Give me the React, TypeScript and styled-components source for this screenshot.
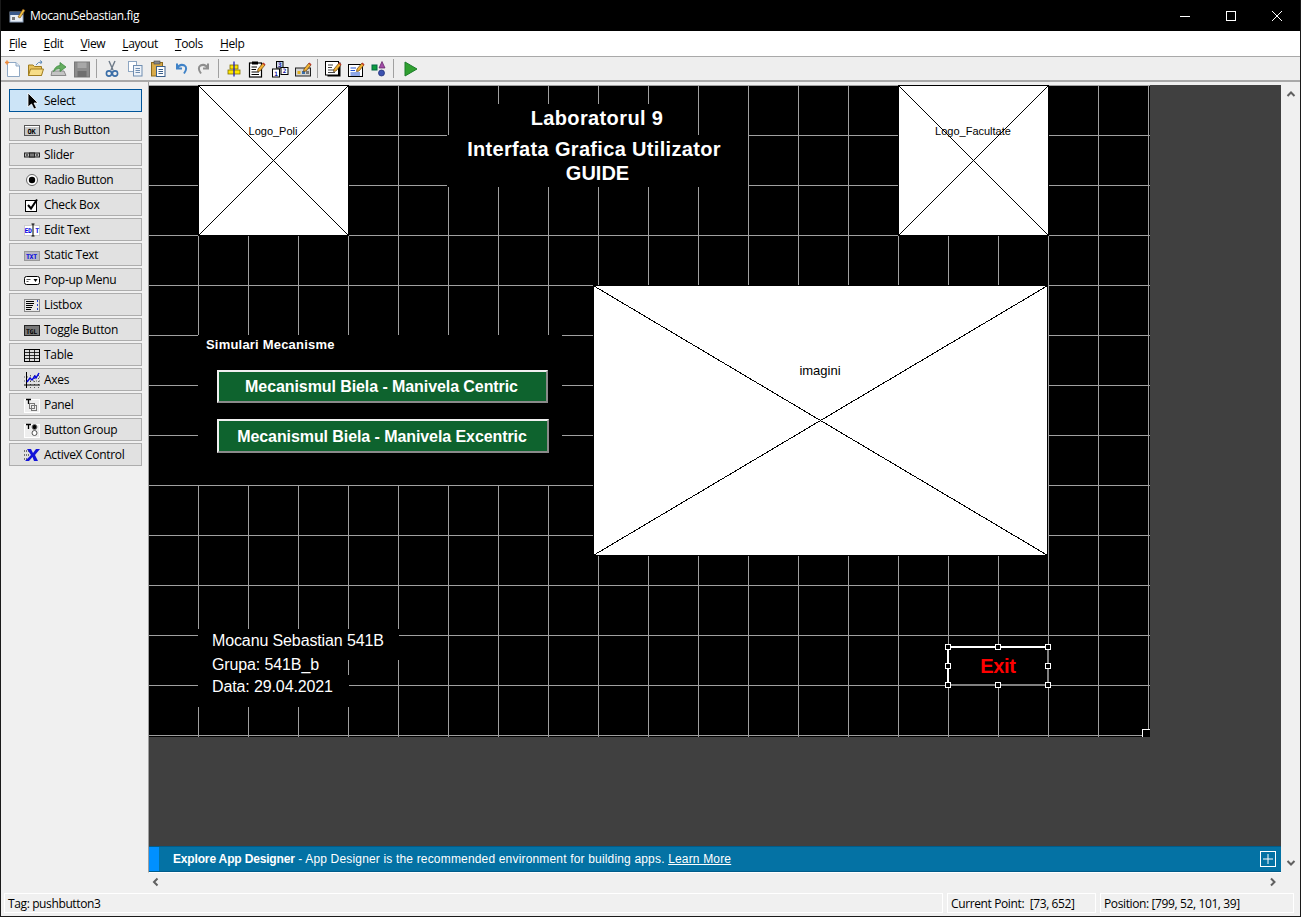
import React from 'react';
import styled, { createGlobalStyle } from 'styled-components';

const ARIAL = '"Liberation Sans", Arial, sans-serif';

const GlobalStyle = createGlobalStyle`
  html, body {
    margin: 0;
    padding: 0;
    background: #f0f0f0;
    overflow: hidden;
  }
  * {
    box-sizing: border-box;
  }
`;

const Window = styled.div`
  width: 1301px;
  height: 917px;
  display: flex;
  flex-direction: column;
  background: #f0f0f0;
  border-left: 1px solid #1a1a1a;
  border-right: 1px solid #1a1a1a;
  border-bottom: 1px solid #1a1a1a;
  font-family: "Open Sans", "Noto Sans", sans-serif;
  font-size: 12px;
  color: #000;
`;

const TitleBar = styled.div`
  height: 31px;
  flex: none;
  display: flex;
  align-items: center;
  background: #000;
  color: #fff;
  padding-left: 8px;
`;

const TitleText = styled.span`
  margin-left: 4px;
  flex: 1;
  font-size: 12px;
  letter-spacing: -0.38px;
`;

const WinButton = styled.div`
  width: 46px;
  height: 31px;
  display: flex;
  align-items: center;
  justify-content: center;
`;

const MenuBar = styled.div`
  height: 26px;
  flex: none;
  display: flex;
  align-items: center;
  gap: 17px;
  padding: 0 0 1px 8px;
  background: #fff;
  border-bottom: 1px solid #a9a9a9;
`;

const MenuItem = styled.span`
  font-size: 12px;
  letter-spacing: -0.36px;
  u {
    text-underline-offset: 2px;
  }
`;

const ToolBar = styled.div`
  height: 25px;
  flex: none;
  display: flex;
  align-items: center;
  background: #eeeeee;
  border-bottom: 2px solid #a9a9a9;
`;

const ToolCell = styled.div`
  width: 23px;
  height: 20px;
  display: flex;
  align-items: center;
  justify-content: center;
`;

const ToolSep = styled.div<{ $after: number }>`
  width: 1px;
  height: 19px;
  margin: 0 ${p => p.$after}px 0 3px;
  background: #a0a0a0;
`;

const Body = styled.div`
  flex: 1;
  min-height: 0;
  display: flex;
`;

const Palette = styled.div`
  width: 147px;
  flex: none;
  display: flex;
  flex-direction: column;
  gap: 2px;
  padding: 7px 6px 0 8px;
  background: #f0f0f0;
`;

const PaletteButton = styled.div<{ $active?: boolean }>`
  height: 23px;
  flex: none;
  display: flex;
  align-items: center;
  padding-left: 14px;
  margin-bottom: ${p => (p.$active ? '4px' : '0')};
  background: ${p => (p.$active ? '#cce4f7' : '#e1e1e1')};
  border: ${p => (p.$active ? '1px solid #005499' : '1px solid #adadad')};
  letter-spacing: -0.3px;
`;

const PaletteIcon = styled.span`
  width: 20px;
  height: 16px;
  flex: none;
  display: flex;
  align-items: center;
`;

const Workspace = styled.div`
  flex: 1;
  min-width: 0;
  display: grid;
  grid-template-columns: 1fr 19px;
  grid-template-rows: 1fr 20px;
`;

const MainColumn = styled.div`
  min-height: 0;
  display: flex;
  flex-direction: column;
  padding-top: 3px;
  border-left: 1px solid #a0a0a0;
  border-bottom: 1px solid #fff;
`;

const FigureArea = styled.div`
  flex: 1;
  min-height: 0;
  background: #404040;
`;

const Figure = styled.div`
  position: relative;
  width: 1001px;
  height: 652px;
  background-color: #000;
  background-image:
    linear-gradient(to right, #a0a0a0 1px, transparent 1px),
    linear-gradient(to bottom, #a0a0a0 1px, transparent 1px);
  background-size: 50px 50px;
  background-position: 49px 0;
  font-family: ${ARIAL};
`;

const ResizeGrip = styled.div`
  position: absolute;
  right: 0;
  bottom: 0;
  width: 8px;
  height: 8px;
  background: #000;
  border-top: 1px solid #fff;
  border-left: 1px solid #fff;
`;

const Placeholder = styled.div<{ $x: number; $y: number; $w: number; $h: number }>`
  position: absolute;
  left: ${p => p.$x}px;
  top: ${p => p.$y}px;
  width: ${p => p.$w}px;
  height: ${p => p.$h}px;
  background: #fff;
  border: 1px solid #000;
  svg {
    display: block;
    width: 100%;
    height: 100%;
  }
`;

const PlaceholderLabel = styled.span<{ $top: number; $size: number }>`
  position: absolute;
  top: ${p => p.$top}px;
  left: 0;
  right: 1px;
  text-align: center;
  font-size: ${p => p.$size}px;
  color: #000;
`;

const StaticText = styled.div<{ $x: number; $y: number; $w: number; $h: number }>`
  position: absolute;
  left: ${p => p.$x}px;
  top: ${p => p.$y}px;
  width: ${p => p.$w}px;
  height: ${p => p.$h}px;
  background: #000;
  color: #fff;
`;

const LabTitle = styled.div<{ $spacing: number; $left?: number; $right?: number }>`
  padding-left: ${p => p.$left || 0}px;
  padding-right: ${p => p.$right || 0}px;
  text-align: center;
  font-size: 20px;
  font-weight: 700;
  line-height: 24px;
  letter-spacing: ${p => p.$spacing}px;
`;

const TitleBlock = styled.div<{ $top: number }>`
  padding-top: ${p => p.$top}px;
`;

const InfoLine = styled.div<{ $height: number }>`
  padding-left: 14px;
  font-size: 16px;
  line-height: ${p => p.$height}px;
  letter-spacing: -0.12px;
  white-space: nowrap;
`;

const MechanismPanel = styled.div`
  position: absolute;
  left: 49px;
  top: 250px;
  width: 364px;
  height: 150px;
  display: flex;
  flex-direction: column;
  align-items: flex-start;
  padding-left: 19px;
  background: #000;
  color: #fff;
`;

const PanelTitle = styled.div`
  margin: 1px 0 16px -11px;
  font-size: 13px;
  font-weight: 700;
  line-height: 18px;
  letter-spacing: 0.2px;
`;

const MechanismButton = styled.div<{ $w: number; $h: number }>`
  width: ${p => p.$w}px;
  height: ${p => p.$h}px;
  margin-bottom: 16px;
  padding: 1px 2px 0 0;
  display: flex;
  align-items: center;
  justify-content: center;
  background: #0e632e;
  border-top: 2px solid #f0f0f0;
  border-left: 2px solid #f0f0f0;
  border-bottom: 2px solid #8a8a8a;
  border-right: 2px solid #8a8a8a;
  font-size: 16px;
  font-weight: 700;
  letter-spacing: -0.08px;
  white-space: nowrap;
`;

const ExitButton = styled.div`
  position: absolute;
  left: 798px;
  top: 561px;
  width: 102px;
  height: 40px;
  display: flex;
  align-items: center;
  justify-content: center;
  background: #000;
  border-top: 2px solid #fff;
  border-left: 2px solid #fff;
  border-bottom: 2px solid #808080;
  border-right: 2px solid #808080;
  color: #ff0000;
  font-size: 20px;
  font-weight: 700;
  letter-spacing: -0.3px;
`;

const Handle = styled.span<{ $x: number; $y: number }>`
  position: absolute;
  left: ${p => p.$x}px;
  top: ${p => p.$y}px;
  width: 6px;
  height: 6px;
  background: #000;
  border: 1px solid #fff;
`;

const Banner = styled.div`
  height: 26px;
  flex: none;
  display: flex;
  align-items: center;
  padding-right: 5px;
  background: #0472a4;
  border-top: 1px solid #005c8a;
  border-bottom: 1px solid #005c8a;
  color: #fff;
  font-family: ${ARIAL};
  font-size: 12px;
`;

const BannerAccent = styled.div`
  width: 10px;
  align-self: stretch;
  flex: none;
  background: #0090ff;
  margin-right: 14px;
`;

const BannerText = styled.div`
  flex: 1;
  letter-spacing: 0.17px;
  b {
    letter-spacing: -0.16px;
  }
  a {
    color: #fff;
    text-decoration: underline;
  }
`;

const VScroll = styled.div`
  grid-row: 1 / 3;
  grid-column: 2;
  display: flex;
  flex-direction: column;
  justify-content: space-between;
  align-items: center;
  padding: 8px 0 25px;
  background: #f0f0f0;
`;

const HScroll = styled.div`
  display: flex;
  align-items: center;
  justify-content: space-between;
  padding: 0 3px 3px 3px;
`;

const StatusBar = styled.div`
  height: 23px;
  flex: none;
  display: flex;
  gap: 4px;
  padding: 0 3px 3px 3px;
  letter-spacing: -0.38px;
`;

const StatusCell = styled.div<{ $w: number }>`
  width: ${p => p.$w}px;
  display: flex;
  align-items: center;
  padding-left: 3px;
  border: 1px solid #fff;
  white-space: pre;
`;

const Ico = styled.svg`
  display: block;
  flex: none;
`;

const Tiny = styled.text`
  font-family: "DejaVu Sans Mono", monospace;
  font-weight: 700;
`;

const Chevron = ({ dir }: { dir: 'up' | 'down' | 'left' | 'right' }) => {
  const d = {
    up: 'M1.5 6 L5 2.5 L8.5 6',
    down: 'M1.5 3 L5 6.5 L8.5 3',
    left: 'M6.5 1.5 L3 5 L6.5 8.5',
    right: 'M3 1.5 L6.5 5 L3 8.5',
  }[dir];
  return (
    <Ico width="10" height="10" viewBox="0 0 10 10">
      <path d={d} fill="none" stroke="#606060" strokeWidth="2" />
    </Ico>
  );
};

const Tool = ({ children }: { children: React.ReactNode }) => (
  <ToolCell>
    <Ico width="18" height="18" viewBox="0 0 18 18">
      {children}
    </Ico>
  </ToolCell>
);

const Pencil = () => (
  <>
    <path d="M10 9 L15 3 L17 5 L12 11 L9.5 11.5 Z" fill="#f2b233" stroke="#5a3a10" strokeWidth="0.7" />
    <path d="M15 3 L17 5" stroke="#c0392b" strokeWidth="1.6" />
  </>
);

const toolbarGroups: React.ReactNode[][] = [
  [
    <>
      <path d="M3.5 2.5 H12 L15.5 6 V16.5 H3.5 Z" fill="#fff" stroke="#8fa8c4" />
      <path d="M12 2.5 V6 H15.5" fill="#dfe8f2" stroke="#8fa8c4" />
      <path d="M1 2.5 H5 M3 .5 V4.5" stroke="#ee8a3a" strokeWidth="1.6" />
    </>,
    <>
      <path d="M1.5 5 H6 L7.5 6.5 H14.5 V15.5 H1.5 Z" fill="#e8c25c" stroke="#a07d20" />
      <path d="M1.5 15.5 L3.5 9 H16.5 L14.5 15.5 Z" fill="#f7dd86" stroke="#a07d20" />
      <path d="M9 5 Q11 1.5 15 2 M15 2 L13 .5 M15 2 L13.5 4" fill="none" stroke="#5b87b5" />
    </>,
    <>
      <path d="M2 11 H14 L16 15.5 H1 Z" fill="#c4c4c4" stroke="#8a8a8a" />
      <path d="M3.5 11.5 Q5 6 10 5.5 V2.5 L16 7 L10 11.5 V8.5 Q6 8.5 3.5 11.5 Z" fill="#64ad5f" stroke="#3f8a42" strokeWidth="0.8" />
    </>,
    <>
      <rect x="1.5" y="2" width="15" height="15" fill="#8c8c8c" stroke="#787878" />
      <rect x="4.5" y="2.5" width="9" height="5.5" fill="#a8a8a8" />
      <rect x="4.5" y="11" width="9" height="6" fill="#6f6f6f" />
    </>,
  ],
  [
    <>
      <path d="M6 1 L10 10 M12 1 L8 10" stroke="#6d7a88" strokeWidth="1.4" />
      <circle cx="6" cy="13.5" r="2.6" fill="none" stroke="#3a6ea8" strokeWidth="1.6" />
      <circle cx="12" cy="13.5" r="2.6" fill="none" stroke="#3a6ea8" strokeWidth="1.6" />
    </>,
    <>
      <rect x="2.5" y="1.5" width="8" height="10" fill="#fff" stroke="#8da6c2" />
      <rect x="7.5" y="5.5" width="8.5" height="10.5" fill="#eef3f9" stroke="#6f8db0" />
      <path d="M9.5 8.5 H14 M9.5 10.5 H14 M9.5 12.5 H14" stroke="#6f8db0" />
    </>,
    <>
      <rect x="2.5" y="2.5" width="11" height="13.5" fill="#d9ab4a" stroke="#8c6a1e" />
      <rect x="5" y="1" width="6" height="3" fill="#888" stroke="#444" strokeWidth="0.6" />
      <rect x="7.5" y="6.5" width="8.5" height="10" fill="#fff" stroke="#3b5f8a" />
      <path d="M9.5 9.5 H14 M9.5 11.5 H14 M9.5 13.5 H14" stroke="#3b5f8a" />
    </>,
    <path d="M5 8 Q8 3.5 12.5 5.5 Q16 8 12 13.5 M5 3.5 V8.5 H10" fill="none" stroke="#3f82c7" strokeWidth="2" />,
    <path d="M13 8 Q10 3.5 5.5 5.5 Q2 8 6 13.5 M13 3.5 V8.5 H8" fill="none" stroke="#8e8e8e" strokeWidth="2" />,
  ],
  [
    <>
      <rect x="5" y="5" width="8" height="4" fill="#ffe600" stroke="#806f00" strokeWidth="0.8" />
      <rect x="3" y="10" width="12" height="4" fill="#ffe600" stroke="#806f00" strokeWidth="0.8" />
      <path d="M9 1.5 V16.5" stroke="#1010c0" strokeWidth="1.2" />
    </>,
    <>
      <rect x="1.5" y="3" width="12" height="14" fill="#fff" stroke="#000" strokeWidth="1.2" />
      <rect x="4" y="1.5" width="6" height="3" fill="#000" />
      <path d="M3.5 7 H9 M3.5 9.5 H8 M3.5 12 H11 M3.5 14.5 H11" stroke="#000" />
      <Pencil />
    </>,
    <>
      <rect x="5.5" y="1.5" width="6.5" height="6.5" fill="#c9d8ea" stroke="#000" />
      <rect x="1.5" y="9" width="7" height="8" fill="#fff" stroke="#000" />
      <rect x="10" y="7.5" width="7" height="7" fill="#fff" stroke="#000" />
      <Tiny x="7" y="7" fontSize="6" fill="#1010a0">3</Tiny>
      <Tiny x="3.2" y="15.5" fontSize="6" fill="#1010a0">1</Tiny>
      <Tiny x="11.8" y="13.4" fontSize="6" fill="#1010a0">2</Tiny>
    </>,
    <>
      <rect x="1.5" y="8" width="15" height="8" fill="#d4d4d4" stroke="#202020" />
      <rect x="3.5" y="11" width="3" height="3" fill="#e0b020" />
      <rect x="8" y="11" width="3" height="3" fill="#3a6ea8" />
      <rect x="12" y="11" width="3" height="3" fill="#777" />
      <Pencil />
    </>,
  ],
  [
    <>
      <rect x="3.5" y="2.5" width="13" height="14" fill="#000" />
      <rect x="1.5" y="1.5" width="13" height="13.5" fill="#fff" stroke="#000" />
      <path d="M4 5 H9 M4 7.5 H8 M4 10 H11 M4 12.5 H11" stroke="#444" />
      <Pencil />
    </>,
    <>
      <rect x="1.5" y="4.5" width="14" height="12" fill="#fff" stroke="#000" />
      <path d="M3.5 8 H9 M3.5 10.5 H8 M3.5 13 H13 M3.5 15 H13" stroke="#1f4fd0" />
      <Pencil />
    </>,
    <>
      <rect x="2" y="5" width="5" height="5" fill="#0c9c3c" stroke="#064" />
      <path d="M12 1.5 L15 8 H9 Z" fill="#a34ca8" stroke="#5a2060" strokeWidth="0.7" />
      <circle cx="11.5" cy="13" r="3" fill="#3c52b0" stroke="#1a2a70" strokeWidth="0.7" />
    </>,
  ],
  [<path d="M3 2 L15 9 L3 16 Z" fill="#30a030" stroke="#1c7c2a" />],
];

const sepAfter = [3, 3, 3, 5];

const paletteIcons: Record<string, React.ReactNode> = {
  Select: (
    <path d="M4 0 V14 L7.5 11 L10 16 L12.5 15 L10 10 H14 Z" fill="#000" stroke="#fff" strokeWidth="0.8" />
  ),
  'Push Button': (
    <>
      <rect x=".5" y="3.5" width="15" height="10" fill="#c8c8c8" stroke="#555" />
      <rect x="1" y="4" width="14" height="1" fill="#fff" />
      <Tiny x="3.5" y="11.5" fontSize="7" fill="#000">OK</Tiny>
    </>
  ),
  Slider: (
    <>
      <rect x=".5" y="6" width="15" height="4" fill="#bbb" stroke="#222" />
      <rect x="5.5" y="6" width="5" height="4" fill="#777" stroke="#222" />
      <path d="M2 8 H4 M12 8 H14" stroke="#000" />
    </>
  ),
  'Radio Button': (
    <>
      <circle cx="8" cy="8" r="5.5" fill="#fff" stroke="#666" />
      <circle cx="8" cy="8" r="3.2" fill="#000" />
    </>
  ),
  'Check Box': (
    <>
      <rect x="1.5" y="3.5" width="11" height="11" fill="#fff" stroke="#000" />
      <path d="M4 8 L7 11.5 L13 2.5" fill="none" stroke="#000" strokeWidth="2" />
    </>
  ),
  'Edit Text': (
    <>
      <rect x=".5" y="3.5" width="15" height="10" fill="#fff" stroke="#ccc" />
      <Tiny x=".5" y="11" fontSize="6.5" fill="#0000e0">ED T</Tiny>
      <path d="M9 2 V14 M7.5 2 H10.5 M7.5 14 H10.5" stroke="#000" />
    </>
  ),
  'Static Text': (
    <>
      <rect x=".5" y="4.5" width="15" height="9" fill="#b8b8c4" stroke="#999" />
      <Tiny x="2" y="11.5" fontSize="6.5" fill="#0000e0">TXT</Tiny>
    </>
  ),
  'Pop-up Menu': (
    <>
      <rect x=".5" y="4.5" width="15" height="8" rx="2" fill="#fff" stroke="#000" />
      <path d="M2.5 7.5 H6.5 M2.5 9.5 H4.5" stroke="#555" />
      <path d="M9.5 7 H13.5 L11.5 10 Z" fill="#000" />
    </>
  ),
  Listbox: (
    <>
      <rect x=".5" y="2.5" width="15" height="12" fill="#e8e8e8" stroke="#888" />
      <path d="M2 4.5 H10 M2 6.5 H10 M2 8.5 H9 M2 10.5 H8 M2 12.5 H7" stroke="#000" />
      <path d="M13.5 3 V13" stroke="#2040d0" strokeDasharray="2 2" />
    </>
  ),
  'Toggle Button': (
    <>
      <rect x=".5" y="3.5" width="15" height="10" fill="#777" stroke="#222" />
      <Tiny x="2" y="11.5" fontSize="6.5" fill="#000">TGL</Tiny>
    </>
  ),
  Table: (
    <>
      <rect x=".5" y="2.5" width="15" height="12" fill="#ddd" stroke="#000" />
      <path d="M1 5.5 H15 M1 8.5 H15 M1 11.5 H15 M5.5 2 V14 M10.5 2 V14" stroke="#000" strokeWidth="0.8" />
    </>
  ),
  Axes: (
    <>
      <path d="M2.5 0 V16 M0 13 H16" stroke="#000" />
      <path d="M6.5 3 V16 M10.5 3 V16 M14.5 3 V16 M0 9 H16 M0 5 H16" stroke="#000" strokeWidth="0.6" strokeDasharray="1 2" />
      <path d="M3 10 L6 6 L8 8 L11 4 L12 6 L15 1" fill="none" stroke="#0000e0" strokeWidth="1.4" />
    </>
  ),
  Panel: (
    <>
      <rect x=".5" y="2.5" width="15" height="13" fill="#eee" stroke="#fff" />
      <path d="M2 2.5 H7 M4.5 2.5 V7" stroke="#000" strokeWidth="1.3" />
      <rect x="5.5" y="6.5" width="5" height="5" fill="none" stroke="#777" />
      <rect x="7.5" y="8.5" width="5" height="5" fill="none" stroke="#777" />
    </>
  ),
  'Button Group': (
    <>
      <rect x=".5" y="2.5" width="15" height="13" fill="#eee" stroke="#fff" />
      <path d="M2 2.5 H7 M4.5 2.5 V7" stroke="#000" strokeWidth="1.3" />
      <circle cx="10.5" cy="5" r="2.5" fill="#000" stroke="#777" />
      <circle cx="10.5" cy="11" r="2.5" fill="#fff" stroke="#555" />
    </>
  ),
  'ActiveX Control': (
    <>
      <path d="M0 4 H5 M0 8 H5 M0 12 H5" stroke="#000" strokeDasharray="1 1" />
      <path d="M3 2 H7 L9 6 L12 2 H16 L11 8 L14 14 H10 L8.5 10 L5 14 H1 L7 8 Z" fill="#1414d8" />
    </>
  ),
};

const paletteItems = [
  'Push Button', 'Slider', 'Radio Button', 'Check Box', 'Edit Text', 'Static Text', 'Pop-up Menu',
  'Listbox', 'Toggle Button', 'Table', 'Axes', 'Panel', 'Button Group', 'ActiveX Control',
];

const menus = [
  ['F', 'ile'], ['E', 'dit'], ['V', 'iew'], ['L', 'ayout'], ['T', 'ools'], ['H', 'elp'],
];

const handles = [
  [-4, -4], [46, -4], [96, -4], [-4, 15], [96, 15], [-4, 34], [46, 34], [96, 34],
];

const PaletteEntry = ({ name, active }: { name: string; active?: boolean }) => (
  <PaletteButton $active={active}>
    <PaletteIcon>
      <Ico width="17" height="16" viewBox="0 0 17 16">
        {paletteIcons[name]}
      </Ico>
    </PaletteIcon>
    {name}
  </PaletteButton>
);

const ImageBox = ({ x, y, w, h, label, top, size }: {
  x: number; y: number; w: number; h: number; label: string; top: number; size: number;
}) => (
  <Placeholder $x={x} $y={y} $w={w} $h={h}>
    <svg viewBox={`0 0 ${w - 2} ${h - 2}`} preserveAspectRatio="none" shapeRendering="crispEdges">
      <path d={`M0 0 L${w - 2} ${h - 2} M${w - 2} 0 L0 ${h - 2}`} stroke="#000" strokeWidth="1" fill="none" />
    </svg>
    <PlaceholderLabel $top={top} $size={size}>{label}</PlaceholderLabel>
  </Placeholder>
);

export default function App() {
  return (
    <>
      <GlobalStyle />
      <Window>
        <TitleBar>
          <Ico width="17" height="17" viewBox="0 0 17 17">
            <rect x="1" y="5" width="13" height="10" fill="#e8eef6" stroke="#8ba0bc" />
            <rect x="1" y="5" width="13" height="3" fill="#3a5a8c" />
            <rect x="3" y="10" width="3" height="3" fill="#777" />
            <path d="M9 10 L14 2 L16 3.5 L11 11 Z" fill="#f0c040" stroke="#704010" strokeWidth="0.6" />
          </Ico>
          <TitleText>MocanuSebastian.fig</TitleText>
          <WinButton>
            <Ico width="10" height="10" viewBox="0 0 10 10">
              <path d="M0 5.5 H10" stroke="#fff" />
            </Ico>
          </WinButton>
          <WinButton>
            <Ico width="10" height="10" viewBox="0 0 10 10">
              <rect x=".5" y=".5" width="9" height="9" fill="none" stroke="#fff" />
            </Ico>
          </WinButton>
          <WinButton>
            <Ico width="10" height="10" viewBox="0 0 10 10">
              <path d="M0 0 L10 10 M10 0 L0 10" stroke="#fff" />
            </Ico>
          </WinButton>
        </TitleBar>

        <MenuBar>
          {menus.map(([key, rest]) => (
            <MenuItem key={key}><u>{key}</u>{rest}</MenuItem>
          ))}
        </MenuBar>

        <ToolBar>
          {toolbarGroups.map((group, g) => (
            <React.Fragment key={g}>
              {g > 0 && <ToolSep $after={sepAfter[g - 1]} />}
              {group.map((icon, i) => <Tool key={i}>{icon}</Tool>)}
            </React.Fragment>
          ))}
        </ToolBar>

        <Body>
          <Palette>
            <PaletteEntry name="Select" active />
            {paletteItems.map(name => <PaletteEntry key={name} name={name} />)}
          </Palette>

          <Workspace>
            <MainColumn>
              <FigureArea>
                <Figure>
                  <ImageBox x={49} y={0} w={151} h={151} label="Logo_Poli" top={39} size={11} />
                  <ImageBox x={749} y={0} w={151} h={151} label="Logo_Facultate" top={39} size={11} />
                  <ImageBox x={444} y={200} w={455} h={271} label="imagini" top={77} size={13} />

                  <StaticText $x={300} $y={19} $w={248} $h={31}>
                    <TitleBlock $top={2}>
                      <LabTitle $spacing={0.38} $left={48}>Laboratorul 9</LabTitle>
                    </TitleBlock>
                  </StaticText>
                  <StaticText $x={298} $y={50} $w={301} $h={52}>
                    <TitleBlock $top={2}>
                      <LabTitle $spacing={0.33} $right={7}>Interfata Grafica Utilizator</LabTitle>
                      <LabTitle $spacing={0}>GUIDE</LabTitle>
                    </TitleBlock>
                  </StaticText>

                  <MechanismPanel>
                    <PanelTitle>Simulari Mecanisme</PanelTitle>
                    <MechanismButton $w={331} $h={33}>Mecanismul Biela - Manivela Centric</MechanismButton>
                    <MechanismButton $w={332} $h={34}>Mecanismul Biela - Manivela Excentric</MechanismButton>
                  </MechanismPanel>

                  <StaticText $x={49} $y={544} $w={201} $h={31}>
                    <InfoLine $height={24}>Mocanu Sebastian 541B</InfoLine>
                  </StaticText>
                  <StaticText $x={49} $y={567} $w={150} $h={26}>
                    <InfoLine $height={26}>Grupa: 541B_b</InfoLine>
                  </StaticText>
                  <StaticText $x={49} $y={590} $w={151} $h={32}>
                    <InfoLine $height={24}>Data: 29.04.2021</InfoLine>
                  </StaticText>

                  <ExitButton>
                    Exit
                    {handles.map(([hx, hy]) => <Handle key={`${hx}-${hy}`} $x={hx} $y={hy} />)}
                  </ExitButton>
                  <ResizeGrip />
                </Figure>
              </FigureArea>
              <Banner>
                <BannerAccent />
                <BannerText>
                  <b>Explore App Designer</b> - App Designer is the recommended environment for building apps. <a>Learn More</a>
                </BannerText>
                <Ico width="16" height="16" viewBox="0 0 16 16">
                  <rect x=".5" y=".5" width="15" height="15" fill="none" stroke="#fff" />
                  <path d="M8 3 V13 M3 8 H13" stroke="#fff" />
                </Ico>
              </Banner>
            </MainColumn>
            <VScroll>
              <Chevron dir="up" />
              <Chevron dir="down" />
            </VScroll>
            <HScroll>
              <Chevron dir="left" />
              <Chevron dir="right" />
            </HScroll>
          </Workspace>
        </Body>

        <StatusBar>
          <StatusCell $w={939}>Tag: pushbutton3</StatusCell>
          <StatusCell $w={149}>Current Point:  [73, 652]</StatusCell>
          <StatusCell $w={194}>Position: [799, 52, 101, 39]</StatusCell>
        </StatusBar>
      </Window>
    </>
  );
}
